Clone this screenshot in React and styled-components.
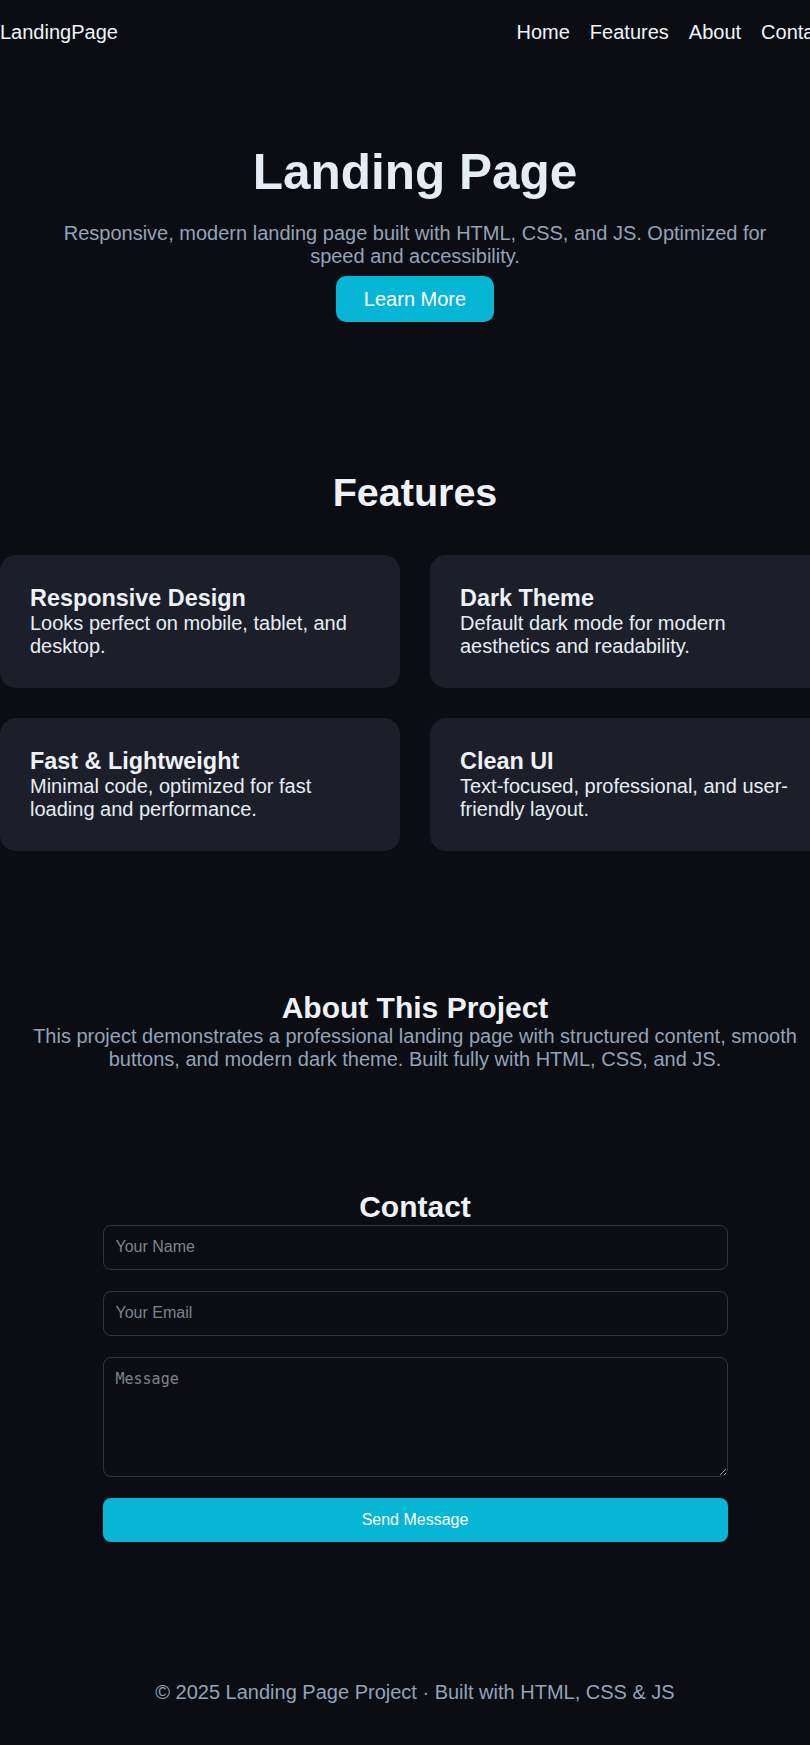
import React from "react";
import styled, { createGlobalStyle } from "styled-components";

const GlobalStyle = createGlobalStyle`
  html, body {
    margin: 0;
    padding: 0;
    background: #0b0d12;
    overflow-x: hidden;
  }
  * { box-sizing: border-box; }
`;

const Page = styled.div`
  width: 830px;
  background: #0b0d12;
  color: #e6edf3;
  font-family: "Liberation Sans", Arial, sans-serif;
  font-size: 20px;
  line-height: normal;
`;

const Nav = styled.nav`
  display: flex;
  justify-content: space-between;
  align-items: center;
  padding-top: 20.5px;
`;

const Logo = styled.a`
  color: #f0f4f8;
  text-decoration: none;
`;

const NavLinks = styled.ul`
  display: flex;
  gap: 20px;
  list-style: none;
  margin: 0;
  padding: 0;
`;

const NavLink = styled.a`
  color: #f0f4f8;
  text-decoration: none;
`;

const Hero = styled.header`
  text-align: center;
  padding-top: 99.6px;
`;

const HeroTitle = styled.h1`
  margin: 0 0 21.7px;
  font-size: 49.5px;
  font-weight: 700;
  color: #e5ecf4;
`;

const Lead = styled.p`
  margin: 0 auto ${(p) => p.$gap || 0}px;
  max-width: ${(p) => p.$max || 830}px;
  color: #94a3b8;
  text-align: center;
`;

const PrimaryLink = styled.a`
  display: inline-block;
  padding: 11.5px 28px;
  border-radius: 10px;
  background: #06b6d4;
  color: #ffffff;
  text-decoration: none;
`;

const Section = styled.section`
  margin-top: ${(p) => p.$top}px;
  text-align: center;
`;

const SectionTitle = styled.h2`
  margin: 0 0 ${(p) => p.$gap || 0}px;
  font-size: ${(p) => p.$size || 30}px;
  font-weight: 700;
  color: #eef2f7;
`;

const CardGrid = styled.div`
  display: grid;
  grid-template-columns: 1fr 1fr;
  gap: 30px;
  text-align: left;
`;

const Card = styled.article`
  background: #1c1f29;
  border-radius: 16px;
  padding: 30px;
`;

const CardTitle = styled.h3`
  margin: 0;
  font-size: 23.4px;
  font-weight: 700;
  color: #eef2f7;
`;

const CardText = styled.p`
  margin: 0;
  color: #e6edf3;
`;

const Form = styled.form`
  width: 625px;
  margin: 1px auto 0;
  display: flex;
  flex-direction: column;
  gap: 21px;
`;

const fieldBase = `
  width: 100%;
  background: transparent;
  border: 1px solid #30353d;
  border-radius: 8px;
  color: #e6edf3;
  outline: none;
  &::placeholder { color: #7e838b; }
`;

const Input = styled.input`
  ${fieldBase}
  height: 45px;
  padding: 0 12px;
  font-family: "Liberation Sans", Arial, sans-serif;
  font-size: 16px;
`;

const TextArea = styled.textarea`
  ${fieldBase}
  height: 120px;
  padding: 12px;
  font-family: "DejaVu Sans Mono", monospace;
  font-size: 15px;
`;

const SubmitButton = styled.button`
  height: 44px;
  border: none;
  border-radius: 8px;
  background: #06b6d4;
  color: #ffffff;
  font-family: "Liberation Sans", Arial, sans-serif;
  font-size: 16px;
  cursor: pointer;
`;

const Footer = styled.footer`
  padding: 139.5px 0 38px;
  text-align: center;
  color: #94a3b8;
`;

const features = [
  { title: "Responsive Design", text: "Looks perfect on mobile, tablet, and desktop." },
  { title: "Dark Theme", text: "Default dark mode for modern aesthetics and readability." },
  { title: "Fast & Lightweight", text: "Minimal code, optimized for fast loading and performance." },
  { title: "Clean UI", text: "Text-focused, professional, and user-friendly layout." },
];

export default function App() {
  return (
    <Page>
      <GlobalStyle />
      <Nav>
        <Logo href="#">LandingPage</Logo>
        <NavLinks>
          <li><NavLink href="#">Home</NavLink></li>
          <li><NavLink href="#features">Features</NavLink></li>
          <li><NavLink href="#about">About</NavLink></li>
          <li><NavLink href="#contact">Contact</NavLink></li>
        </NavLinks>
      </Nav>

      <Hero>
        <HeroTitle>Landing Page</HeroTitle>
        <Lead $max={720} $gap={8.5}>
          Responsive, modern landing page built with HTML, CSS, and JS. Optimized for speed and accessibility.
        </Lead>
        <PrimaryLink href="#features">Learn More</PrimaryLink>
      </Hero>

      <Section id="features" $top={147.3}>
        <SectionTitle $size={39.5} $gap={40.3}>Features</SectionTitle>
        <CardGrid>
          {features.map((f) => (
            <Card key={f.title}>
              <CardTitle>{f.title}</CardTitle>
              <CardText>{f.text}</CardText>
            </Card>
          ))}
        </CardGrid>
      </Section>

      <Section id="about" $top={140.3}>
        <SectionTitle>About This Project</SectionTitle>
        <Lead>
          This project demonstrates a professional landing page with structured content, smooth buttons, and modern dark theme. Built fully with HTML, CSS, and JS.
        </Lead>
      </Section>

      <Section id="contact" $top={118.8}>
        <SectionTitle>Contact</SectionTitle>
        <Form onSubmit={(e) => e.preventDefault()}>
          <Input type="text" placeholder="Your Name" />
          <Input type="email" placeholder="Your Email" />
          <TextArea placeholder="Message" />
          <SubmitButton type="submit">Send Message</SubmitButton>
        </Form>
      </Section>

      <Footer>© 2025 Landing Page Project · Built with HTML, CSS &amp; JS</Footer>
    </Page>
  );
}
